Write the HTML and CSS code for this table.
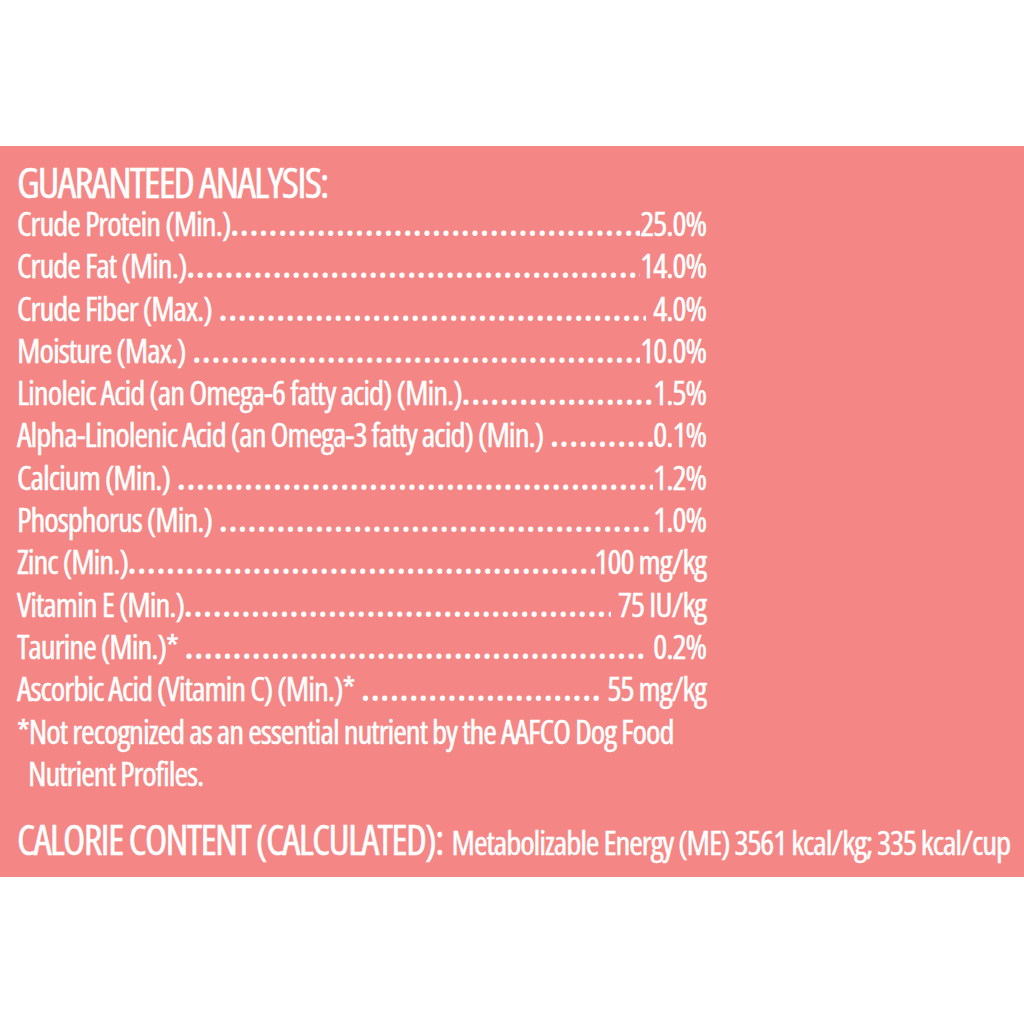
FILE: index.html
```html
<!DOCTYPE html>
<html lang="en">
<head>
<meta charset="utf-8">
<title>Guaranteed Analysis</title>
<link rel="stylesheet" href="styles.css">
</head>
<body>
<section class="panel">
  <h1 class="title">GUARANTEED ANALYSIS:</h1>
  <ul class="rows">
    <li class="row"><span class="label">Crude Protein (Min.)</span><span class="dots"></span><span class="value">25.0%</span></li>
    <li class="row"><span class="label">Crude Fat (Min.)</span><span class="dots"></span><span class="value">14.0%</span></li>
    <li class="row"><span class="label sp">Crude Fiber (Max.)</span><span class="dots"></span><span class="value sp">4.0%</span></li>
    <li class="row"><span class="label sp">Moisture (Max.)</span><span class="dots"></span><span class="value">10.0%</span></li>
    <li class="row"><span class="label">Linoleic Acid (an Omega-6 fatty acid) (Min.)</span><span class="dots"></span><span class="value">1.5%</span></li>
    <li class="row"><span class="label sp">Alpha-Linolenic Acid (an Omega-3 fatty acid) (Min.)</span><span class="dots"></span><span class="value">0.1%</span></li>
    <li class="row"><span class="label sp">Calcium (Min.)</span><span class="dots"></span><span class="value">1.2%</span></li>
    <li class="row"><span class="label sp">Phosphorus (Min.)</span><span class="dots"></span><span class="value">1.0%</span></li>
    <li class="row"><span class="label">Zinc (Min.)</span><span class="dots"></span><span class="value">100 mg/kg</span></li>
    <li class="row"><span class="label">Vitamin E (Min.)</span><span class="dots"></span><span class="value sp">75 IU/kg</span></li>
    <li class="row"><span class="label sp">Taurine (Min.)*</span><span class="dots"></span><span class="value sp">0.2%</span></li>
    <li class="row"><span class="label sp">Ascorbic Acid (Vitamin C) (Min.)*</span><span class="dots"></span><span class="value sp">55 mg/kg</span></li>
  </ul>
  <p class="note">*Not recognized as an essential nutrient by the AAFCO Dog Food Nutrient Profiles.</p>
  <p class="calorie"><span class="cal-head">CALORIE CONTENT (CALCULATED):</span><span class="cal-text">Metabolizable Energy (ME) 3561 kcal/kg; 335 kcal/cup</span></p>
</section>
</body>
</html>
```
FILE: styles.css
```css
html, body {
  margin: 0;
  padding: 0;
  background: #ffffff;
}

body {
  font-family: "Open Sans", "Noto Sans", sans-serif;
  font-stretch: 75%;
  font-weight: 500;
  color: #ffffff;
  -webkit-text-stroke: 0.45px #ffffff;
}

.panel {
  margin-top: 146px;
  height: 731px;
  box-sizing: border-box;
  background: #f48785;
  padding: 15px 0 0 17px;
  overflow: hidden;
}

.title {
  margin: 0;
  font-size: 42px;
  font-weight: 500;
  letter-spacing: -1.9px;
  line-height: 42px;
}

.rows {
  list-style: none;
  margin: 0;
  padding: 0;
  width: 689px;
}

.row {
  display: flex;
  align-items: baseline;
  font-size: 33px;
  letter-spacing: -1.05px;
  line-height: 42.3px;
  white-space: nowrap;
}

.label, .value {
  flex: none;
}

.label.sp {
  margin-right: 7px;
}

.value.sp {
  margin-left: 7px;
}

.dots {
  flex: 1 1 auto;
  overflow: hidden;
  min-width: 0;
  font-weight: 700;
  -webkit-text-stroke: 0;
}

.dots::before {
  content: "....................................................................................................................................................";
  letter-spacing: 1.2px;
}

.note {
  margin: 0;
  width: 700px;
  font-size: 33px;
  letter-spacing: -1.05px;
  line-height: 42.3px;
  padding-left: 11px;
  text-indent: -11px;
}

.calorie {
  margin: 19px 0 0;
  white-space: nowrap;
  line-height: 50px;
}

.cal-head {
  font-size: 41px;
  letter-spacing: -1.75px;
  margin-right: 9px;
}

.cal-text {
  font-size: 33px;
  letter-spacing: -1.1px;
}
```
